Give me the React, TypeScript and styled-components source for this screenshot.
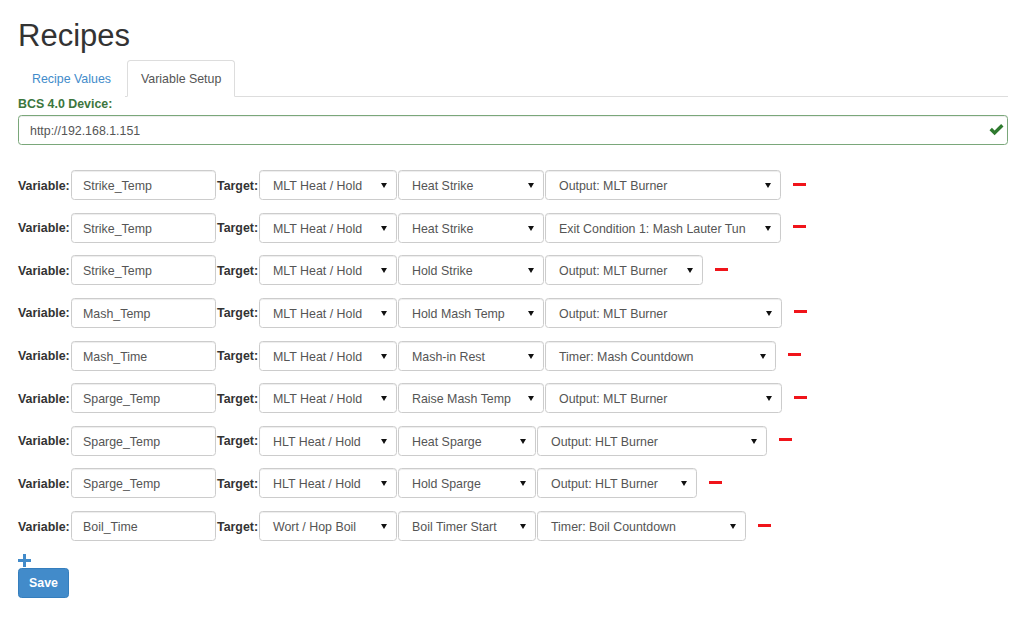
import React from "react";
import styled, { createGlobalStyle } from "styled-components";

const Global = createGlobalStyle`
  html, body { margin: 0; padding: 0; background: #fff; }
  body {
    font-family: "Liberation Sans", Arial, sans-serif;
    font-size: 12.4px;
    color: #333;
  }
  * { box-sizing: border-box; }
`;

const Page = styled.div`
  padding: 0 16px 0 18px;
`;

const Title = styled.h1`
  margin: 18px 0 0;
  font-size: 31px;
  font-weight: 400;
  line-height: 35px;
  color: #333;
`;

const Tabs = styled.ul`
  list-style: none;
  margin: 7px 0 0;
  padding: 0;
  display: flex;
  border-bottom: 1px solid #ddd;
`;

const Tab = styled.li<{ $active?: boolean }>`
  height: 37px;
  margin: 0 2px -1px 0;
  padding: 1px 13px 0;
  display: flex;
  align-items: center;
  border: 1px solid ${(p) => (p.$active ? "#ddd" : "transparent")};
  border-bottom-color: ${(p) => (p.$active ? "#fff" : "transparent")};
  border-radius: 3.5px 3.5px 0 0;
  background: #fff;
  color: ${(p) => (p.$active ? "#555" : "#428bca")};
  cursor: pointer;
`;

const DeviceLabel = styled.label`
  display: block;
  margin: 0 0 3px;
  line-height: 15px;
  font-weight: 700;
  color: #3c763d;
`;

const DeviceWrap = styled.div`
  position: relative;
`;

const DeviceInput = styled.input`
  display: block;
  width: 100%;
  height: 30px;
  padding: 1px 11px 0;
  font: inherit;
  color: #555;
  border: 1px solid #7aa77a;
  border-radius: 3.5px;
  outline: none;
  box-shadow: inset 0 1px 1px rgba(0, 0, 0, 0.075);
`;

const OkIcon = styled.svg`
  position: absolute;
  right: 4px;
  top: 8px;
  width: 15px;
  height: 13px;
`;

const Rows = styled.div`
  margin-top: 25px;
  display: flex;
  flex-direction: column;
  gap: 12.625px;
`;

const Row = styled.div`
  display: flex;
  align-items: center;
  height: 30px;
`;

const FieldLabel = styled.span<{ $w: number }>`
  width: ${(p) => p.$w}px;
  padding-top: 1px;
  font-weight: 700;
  color: #333;
  white-space: nowrap;
  margin-left: ${(p) => (p.$w === 52 ? 0 : 1)}px;
`;

const TextBox = styled.input`
  width: 145px;
  height: 30px;
  margin-left: 1px;
  padding: 2px 11px 0;
  font: inherit;
  color: #555;
  border: 1px solid #ccc;
  border-radius: 3.5px;
  outline: none;
  box-shadow: inset 0 1px 1px rgba(0, 0, 0, 0.075);
`;

const SelectBox = styled.div<{ $w: number; $gap: number }>`
  position: relative;
  width: ${(p) => p.$w}px;
  height: 30px;
  margin-left: ${(p) => p.$gap}px;
  padding: 2px 24px 0 13px;
  display: flex;
  align-items: center;
  color: #555;
  white-space: nowrap;
  overflow: hidden;
  border: 1px solid #ccc;
  border-radius: 3.5px;
  background: #fff;
  box-shadow: inset 0 1px 1px rgba(0, 0, 0, 0.075);
`;

const Caret = styled.span`
  position: absolute;
  right: 9px;
  top: 12px;
  width: 0;
  height: 0;
  border-left: 3px solid transparent;
  border-right: 3px solid transparent;
  border-top: 5px solid #111;
`;

const Remove = styled.button`
  margin-left: 12px;
  width: 13px;
  height: 3px;
  padding: 0;
  border: 0;
  background: #f0141a;
  cursor: pointer;
  position: relative;
  top: -1px;
`;

const AddIcon = styled.svg`
  display: block;
  margin-top: 13px;
  width: 13px;
  height: 13px;
`;

const SaveButton = styled.button`
  display: block;
  margin-top: 1px;
  width: 51px;
  height: 30px;
  padding: 0;
  font: inherit;
  font-weight: 700;
  color: #fff;
  background: #428bca;
  border: 1px solid #357ebd;
  border-radius: 3.5px;
  cursor: pointer;
`;

type RowData = {
  v: string;
  t: string;
  s: string;
  o: string;
  w1: number;
  w2: number;
  w3: number;
};

const rows: RowData[] = [
  { v: "Strike_Temp", t: "MLT Heat / Hold", s: "Heat Strike", o: "Output: MLT Burner", w1: 138, w2: 146, w3: 236 },
  { v: "Strike_Temp", t: "MLT Heat / Hold", s: "Heat Strike", o: "Exit Condition 1: Mash Lauter Tun", w1: 138, w2: 146, w3: 236 },
  { v: "Strike_Temp", t: "MLT Heat / Hold", s: "Hold Strike", o: "Output: MLT Burner", w1: 138, w2: 146, w3: 158 },
  { v: "Mash_Temp", t: "MLT Heat / Hold", s: "Hold Mash Temp", o: "Output: MLT Burner", w1: 138, w2: 146, w3: 237 },
  { v: "Mash_Time", t: "MLT Heat / Hold", s: "Mash-in Rest", o: "Timer: Mash Countdown", w1: 138, w2: 146, w3: 231 },
  { v: "Sparge_Temp", t: "MLT Heat / Hold", s: "Raise Mash Temp", o: "Output: MLT Burner", w1: 138, w2: 146, w3: 237 },
  { v: "Sparge_Temp", t: "HLT Heat / Hold", s: "Heat Sparge", o: "Output: HLT Burner", w1: 138, w2: 138, w3: 230 },
  { v: "Sparge_Temp", t: "HLT Heat / Hold", s: "Hold Sparge", o: "Output: HLT Burner", w1: 138, w2: 138, w3: 160 },
  { v: "Boil_Time", t: "Wort / Hop Boil", s: "Boil Timer Start", o: "Timer: Boil Countdown", w1: 138, w2: 138, w3: 209 },
];

function Select({ value, w, gap }: { value: string; w: number; gap: number }) {
  return (
    <SelectBox $w={w} $gap={gap}>
      {value}
      <Caret />
    </SelectBox>
  );
}

export default function App() {
  return (
    <>
      <Global />
      <Page>
        <Title>Recipes</Title>
        <Tabs>
          <Tab>Recipe Values</Tab>
          <Tab $active>Variable Setup</Tab>
        </Tabs>
        <DeviceLabel>BCS 4.0 Device:</DeviceLabel>
        <DeviceWrap>
          <DeviceInput readOnly value="http://192.168.1.151" />
          <OkIcon viewBox="0 0 15 13">
            <path d="M0.5 7.2 L2.9 4.8 L5.6 7.5 L12.1 1 L14.5 3.4 L5.6 12.3 Z" fill="#2f7a2f" />
          </OkIcon>
        </DeviceWrap>
        <Rows>
          {rows.map((r, i) => (
            <Row key={i}>
              <FieldLabel $w={52}>Variable:</FieldLabel>
              <TextBox readOnly value={r.v} />
              <FieldLabel $w={42}>Target:</FieldLabel>
              <Select value={r.t} w={r.w1} gap={0} />
              <Select value={r.s} w={r.w2} gap={1} />
              <Select value={r.o} w={r.w3} gap={1} />
              <Remove aria-label="remove" />
            </Row>
          ))}
        </Rows>
        <AddIcon viewBox="0 0 13 13">
          <path d="M5 0 H8 V5 H13 V8 H8 V13 H5 V8 H0 V5 H5 Z" fill="#428bca" />
        </AddIcon>
        <SaveButton>Save</SaveButton>
      </Page>
    </>
  );
}
